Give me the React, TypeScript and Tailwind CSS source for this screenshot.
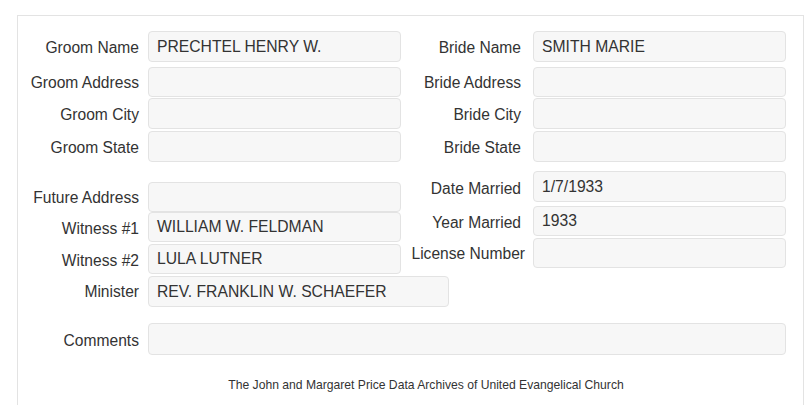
const font = { fontFamily: '"Liberation Sans", Arial, sans-serif' }

interface FieldProps {
  label: string
  value?: string
  labelW: string
  gap: string
  inputW: string
  h?: string
  mt?: string
  labelCls?: string
}

function Field({ label, value, labelW, gap, inputW, h = 'h-[31px]', mt = '', labelCls = '' }: FieldProps) {
  return (
    <div className={`flex items-center ${mt}`}>
      <div className={`${labelW} flex shrink-0 justify-end whitespace-nowrap text-[15.6px] text-[#333] ${labelCls}`}>
        <span>{label}</span>
      </div>
      <div
        className={`${gap} ${inputW} ${h} flex shrink-0 items-center rounded-[4px] border border-[#e3e3e3] bg-[#f7f7f7] px-[8px] text-[15.7px] text-[#333]`}
      >
        {value}
      </div>
    </div>
  )
}

const L = { labelW: 'w-[121px]', gap: 'ml-[9px]', inputW: 'w-[253px]' }
const R = { labelW: 'w-[103px]', gap: 'ml-[12px]', inputW: 'w-[253px]' }

export default function App() {
  return (
    <div className="h-[405px] w-[805px] overflow-hidden bg-white pt-[15px]" style={font}>
      <div className="ml-[17px] mr-[1px] h-[420px] border border-[#e3e3e3] pt-[15px]">
        {/* groom / bride */}
        <div className="flex">
          <div className="flex w-[383px] flex-col">
            <Field label="Groom Name" value="PRECHTEL HENRY W." {...L} labelCls="pt-[2px]" />
            <Field label="Groom Address" {...L} h="h-[30px]" mt="mt-[5px]" labelCls="pt-[2px]" />
            <Field label="Groom City" {...L} mt="mt-[1px]" labelCls="pt-[2px]" />
            <Field label="Groom State" {...L} mt="mt-[2px]" labelCls="pt-[2px]" />
          </div>
          <div className="flex flex-col pl-[17px]">
            <Field label="Bride Name" value="SMITH MARIE" {...R} labelCls="pt-[2px]" />
            <Field label="Bride Address" {...R} h="h-[30px]" mt="mt-[5px]" labelCls="pt-[2px]" />
            <Field label="Bride City" {...R} mt="mt-[1px]" labelCls="pt-[2px]" />
            <Field label="Bride State" {...R} mt="mt-[2px]" labelCls="pt-[2px]" />
          </div>
        </div>

        {/* witnesses / dates */}
        <div className="mt-[9px] flex">
          <div className="flex w-[383px] flex-col pt-[11px]">
            <Field label="Future Address" {...L} h="h-[30px]" labelCls="pt-[2px]" />
            <Field label="Witness #1" value="WILLIAM W. FELDMAN" {...L} h="h-[30px]" labelCls="pt-[3px]" />
            <Field label="Witness #2" value="LULA LUTNER" {...L} h="h-[30px]" mt="mt-[2px]" labelCls="pt-[3px]" />
            <Field label="Minister" value="REV. FRANKLIN W. SCHAEFER" {...L} inputW="w-[301px]" mt="mt-[2px]" labelCls="pt-[1px]" />
          </div>
          <div className="flex flex-col pl-[17px]">
            <Field label="Date Married" value="1/7/1933" {...R} labelCls="pt-[4px]" />
            <Field label="Year Married" value="1933" {...R} h="h-[30px]" mt="mt-[4px]" labelCls="pt-[3px]" />
            <Field
              label="License Number"
              {...R}
              labelW="w-[107px]"
              gap="ml-[8px]"
              h="h-[30px]"
              mt="mt-[2px]"
              labelCls="pt-[1px]"
            />
          </div>
        </div>

        <Field label="Comments" {...L} inputW="w-[638px]" h="h-[32px]" mt="mt-[16px]" labelCls="pt-[4px]" />

        <p className="mt-[21px] pl-[31px] text-center text-[12.15px] text-[#333]">
          The John and Margaret Price Data Archives of United Evangelical Church
        </p>
      </div>
    </div>
  )
}
